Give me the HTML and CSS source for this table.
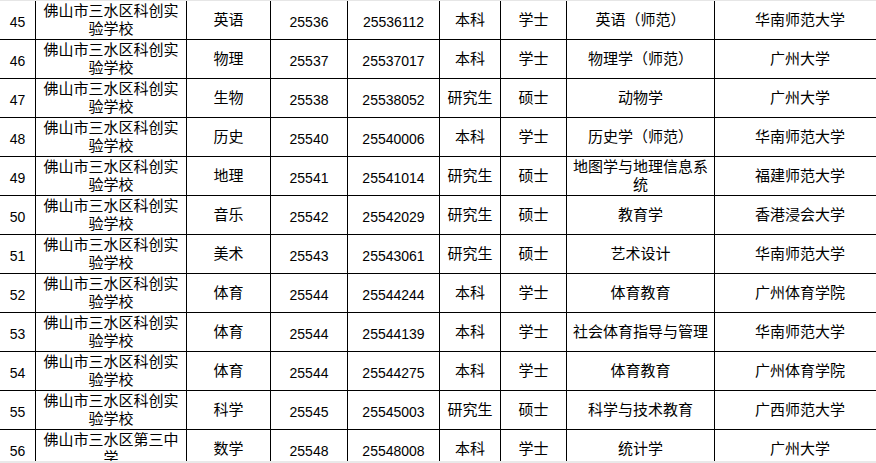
FILE: index.html
```html
<!DOCTYPE html>
<html lang="zh">
<head>
<meta charset="utf-8">
<link rel="stylesheet" href="styles.css">
</head>
<body>
<div class="sheet">
  <div class="grid">
    <div class="c n">45</div><div class="c">佛山市三水区科创实验学校</div><div class="c">英语</div><div class="c n">25536</div><div class="c n">25536112</div><div class="c">本科</div><div class="c">学士</div><div class="c">英语（师范）</div><div class="c">华南师范大学</div>
    <div class="c n">46</div><div class="c">佛山市三水区科创实验学校</div><div class="c">物理</div><div class="c n">25537</div><div class="c n">25537017</div><div class="c">本科</div><div class="c">学士</div><div class="c">物理学（师范）</div><div class="c">广州大学</div>
    <div class="c n">47</div><div class="c">佛山市三水区科创实验学校</div><div class="c">生物</div><div class="c n">25538</div><div class="c n">25538052</div><div class="c">研究生</div><div class="c">硕士</div><div class="c">动物学</div><div class="c">广州大学</div>
    <div class="c n">48</div><div class="c">佛山市三水区科创实验学校</div><div class="c">历史</div><div class="c n">25540</div><div class="c n">25540006</div><div class="c">本科</div><div class="c">学士</div><div class="c">历史学（师范）</div><div class="c">华南师范大学</div>
    <div class="c n">49</div><div class="c">佛山市三水区科创实验学校</div><div class="c">地理</div><div class="c n">25541</div><div class="c n">25541014</div><div class="c">研究生</div><div class="c">硕士</div><div class="c">地图学与地理信息系统</div><div class="c">福建师范大学</div>
    <div class="c n">50</div><div class="c">佛山市三水区科创实验学校</div><div class="c">音乐</div><div class="c n">25542</div><div class="c n">25542029</div><div class="c">研究生</div><div class="c">硕士</div><div class="c">教育学</div><div class="c">香港浸会大学</div>
    <div class="c n">51</div><div class="c">佛山市三水区科创实验学校</div><div class="c">美术</div><div class="c n">25543</div><div class="c n">25543061</div><div class="c">研究生</div><div class="c">硕士</div><div class="c">艺术设计</div><div class="c">华南师范大学</div>
    <div class="c n">52</div><div class="c">佛山市三水区科创实验学校</div><div class="c">体育</div><div class="c n">25544</div><div class="c n">25544244</div><div class="c">本科</div><div class="c">学士</div><div class="c">体育教育</div><div class="c">广州体育学院</div>
    <div class="c n">53</div><div class="c">佛山市三水区科创实验学校</div><div class="c">体育</div><div class="c n">25544</div><div class="c n">25544139</div><div class="c">本科</div><div class="c">学士</div><div class="c">社会体育指导与管理</div><div class="c">华南师范大学</div>
    <div class="c n">54</div><div class="c">佛山市三水区科创实验学校</div><div class="c">体育</div><div class="c n">25544</div><div class="c n">25544275</div><div class="c">本科</div><div class="c">学士</div><div class="c">体育教育</div><div class="c">广州体育学院</div>
    <div class="c n">55</div><div class="c">佛山市三水区科创实验学校</div><div class="c">科学</div><div class="c n">25545</div><div class="c n">25545003</div><div class="c">研究生</div><div class="c">硕士</div><div class="c">科学与技术教育</div><div class="c">广西师范大学</div>
    <div class="c n">56</div><div class="c">佛山市三水区第三中学</div><div class="c">数学</div><div class="c n">25548</div><div class="c n">25548008</div><div class="c">本科</div><div class="c">学士</div><div class="c">统计学</div><div class="c">广州大学</div>
  </div>
</div>
<div class="hscroll"></div>
</body>
</html>
```
FILE: styles.css
```css
html, body {
  margin: 0;
  padding: 0;
  background: #fff;
  overflow: hidden;
  height: 463px;
}
.sheet {
  border-top: 1px solid #e6e6e6;
  width: 900px;
}
.grid {
  display: grid;
  grid-template-columns: 35px 150px 83px 76px 91px 60px 65px 147px 170px;
  grid-auto-rows: 38px;
  gap: 1px;
  background: #000;
  padding-bottom: 1px;
}
.c {
  background: #fff;
  display: flex;
  align-items: center;
  justify-content: center;
  text-align: center;
  padding: 0 3px;
  font-family: "Liberation Sans", "Noto Sans CJK SC", sans-serif;
  font-size: 15px;
  line-height: 18px;
  color: #000;
  overflow: hidden;
}
.c.n {
  font-size: 14px;
  padding-top: 3px;
}
.hscroll {
  position: fixed;
  left: 0;
  right: 0;
  bottom: 0;
  height: 2px;
  background: #e9e9e9;
}
```
